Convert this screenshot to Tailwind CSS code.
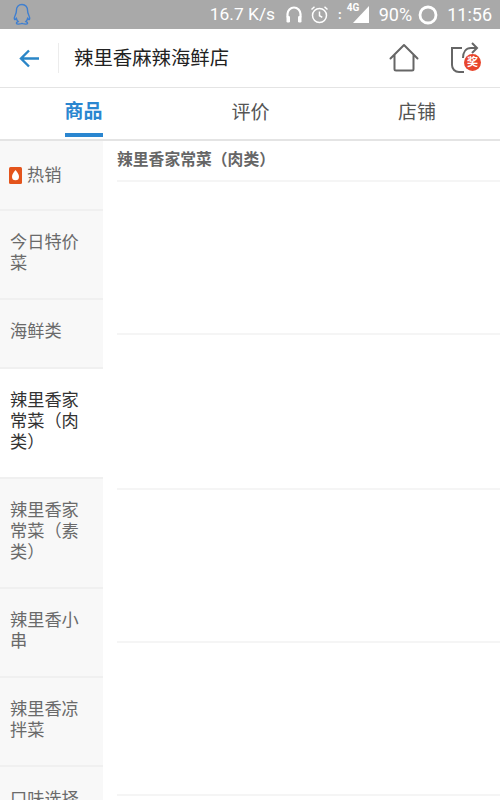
<!DOCTYPE html>
<html>
<head>
<meta charset="utf-8">
<script src="https://cdn.jsdelivr.net/npm/@tailwindcss/browser@4"></script>
</head>
<body class="bg-white">
<div class="w-[500px] h-[800px] overflow-hidden bg-white font-['Roboto','Noto_Sans_CJK_SC',sans-serif]">

    <!-- Status bar -->
    <div class="h-[29px] bg-[#a9a9a9] flex items-center text-white text-[18px] pl-[13px] pr-[8px]">
        <svg width="18" height="24" viewBox="0 0 18 24" fill="none" stroke="#3f7fd0" stroke-width="1.4">
            <path d="M9 1.5c-3.6 0-5.6 2.8-5.6 6.2 0 1.6-.3 2.6-1 4-.9 1.9-1.4 3.6-.9 4.6.4.6 1.200.1 1.900-.8.3 1.300 1 2.300 1.700 3-1 .4-1.900 1-1.700 1.800.3 1 2.800 1 4.700.4.500-.2 1.300-.2 1.800 0 1.900.6 4.400.6 4.700-.4.200-.8-.7-1.400-1.700-1.800.7-.7 1.400-1.700 1.700-3 .7.900 1.500 1.400 1.900.8.500-1 0-2.700-.9-4.600-.7-1.400-1-2.400-1-4 0-3.400-2-6.200-5.600-6.200z"/>
        </svg>
        <div class="ml-auto flex items-center">
            <span class="text-[17.4px]">16.7 K/s</span>
            <svg class="ml-[10px]" width="18" height="19" viewBox="0 0 18 19" fill="none" stroke="white" stroke-width="2.200">
                <path d="M2.500 12V9a6.500 6.500 0 0 1 13 0v3"/>
                <rect x="1.500" y="11" width="3.500" height="6.500" rx="1.200" fill="white" stroke="none"/>
                <rect x="13" y="11" width="3.500" height="6.500" rx="1.200" fill="white" stroke="none"/>
            </svg>
            <svg class="ml-[7px]" width="19" height="19" viewBox="0 0 19 19" fill="none" stroke="white" stroke-width="1.500">
                <circle cx="9.500" cy="10.500" r="7"/>
                <path d="M9.500 6.500v4.200l2.800 1.600M1.500 4.500l3-2.700M17.500 4.500l-3-2.700"/>
            </svg>
            <span class="ml-[9px] text-[13px] font-bold leading-none">:</span>
            <div class="relative w-[25px] h-[19px] ml-[2px]">
                <svg class="absolute left-0 top-0" width="25" height="19" viewBox="0 0 25 19">
                    <path d="M25 1v17H9z" fill="white"/>
                </svg>
                <span class="absolute left-[3px] top-[-3px] text-[10px] font-bold leading-[12px]">4G</span>
            </div>
            <span class="ml-[10px]">90%</span>
            <svg class="ml-[6px]" width="20" height="20" viewBox="0 0 20 20" fill="none">
                <circle cx="10" cy="10" r="8" stroke="white" stroke-width="2.800"/>
            </svg>
            <span class="ml-[9px]">11:56</span>
        </div>
    </div>

    <!-- Title bar -->
    <div class="h-[59px] flex items-center border-b border-[#e4e4e4]">
        <div class="w-[59px] h-[30px] flex items-center border-r border-[#ececec] pl-[19px]">
            <svg width="21" height="19" viewBox="0 0 21 19" fill="none" stroke="#2a86c8" stroke-width="2.400">
                <path d="M20 9.500H2M10 1.500l-8 8 8 8"/>
            </svg>
        </div>
        <div class="ml-[15px] pt-[2px] text-[19.4px] leading-none text-[#222]">辣里香麻辣海鲜店</div>
        <div class="ml-auto flex items-center">
            <svg width="30" height="30" viewBox="0 0 30 30" fill="none" stroke="#666" stroke-width="2" stroke-linejoin="round" stroke-linecap="round">
                <path d="M1.500 15.500 15 2l13.500 13.500M5.500 12v14a1.500 1.500 0 0 0 1.500 1.500h16a1.500 1.500 0 0 0 1.500-1.500V12"/>
            </svg>
            <div class="relative w-[32px] h-[32px] ml-[30px] mr-[19px]">
                <svg width="32" height="32" viewBox="0 0 32 32" fill="none" stroke="#666" stroke-width="2">
                    <path d="M13 6H3v17c0 4 3 7 7 7h5M14 16c0-6 3-10 8-10h6M23 1l5 5-5 5"/>
                </svg>
                <span class="absolute right-0 bottom-[3px] w-[17px] h-[17px] rounded-full bg-[#e8452c] text-white text-[11px] leading-[17px] text-center font-bold">奖</span>
            </div>
        </div>
    </div>

    <!-- Tabs -->
    <div class="h-[53px] flex border-b-2 border-[#e4e4e4] text-[19px] text-[#555]">
        <div class="w-[167px] flex justify-center">
            <div class="h-[49px] w-[38px] pt-[3px] flex items-center justify-center whitespace-nowrap border-b-[4px] border-[#2a86d0] text-[#2a86d0] font-bold">商品</div>
        </div>
        <div class="w-[167px] flex items-center justify-center">评价</div>
        <div class="w-[166px] flex items-center justify-center">店铺</div>
    </div>

    <div class="flex">
        <!-- Category menu -->
        <div class="w-[103px] shrink-0 bg-[#f8f8f8] text-[#6a6a6a] text-[17.2px] leading-[21px]">
            <div class="h-[70px] flex items-center pl-[9px] border-b-2 border-[#f0f0f0]">
                <svg width="13" height="17" viewBox="0 0 13 17" class="mr-[5px]">
                    <rect width="13" height="17" rx="1.500" fill="#e4541c"/>
                    <path d="M6.500 3c2 2.600 3.500 4.400 3.500 6.800a3.500 3.500 0 0 1-7 0C3 7.400 4.500 5.600 6.500 3z" fill="#fff"/>
                </svg>
                <span>热销</span>
            </div>
            <div class="h-[89px] flex items-center px-[10px] pb-[3px] border-b-2 border-[#f0f0f0]">今日特价菜</div>
            <div class="h-[69px] flex items-center px-[10px] pb-[4px] border-b-2 border-[#f0f0f0]">海鲜类</div>
            <div class="h-[108px] flex items-center px-[10px] pb-[4px] bg-white text-[#333]">辣里香家常菜（肉类）</div>
            <div class="h-[112px] flex items-center px-[10px] pb-[4px] border-y-2 border-[#f0f0f0]">辣里香家常菜（素类）</div>
            <div class="h-[89px] flex items-center px-[10px] pb-[4px] border-b-2 border-[#f0f0f0]">辣里香小串</div>
            <div class="h-[89px] flex items-center px-[10px] pb-[4px] border-b-2 border-[#f0f0f0]">辣里香凉拌菜</div>
            <div class="h-[89px] px-[10px] pt-[22px]">口味选择</div>
        </div>

        <!-- Product list -->
        <div class="flex-1 pl-[14px]">
            <div class="h-[41px] pt-[8px] text-[15.8px] leading-[22px] font-bold text-[#666] border-b-2 border-[#f5f5f5]">辣里香家常菜（肉类）</div>
            <div class="h-[153px] border-b-2 border-[#f5f5f5]"></div>
            <div class="h-[155px] border-b-2 border-[#f5f5f5]"></div>
            <div class="h-[153px] border-b-2 border-[#f5f5f5]"></div>
            <div class="h-[153px] border-b-2 border-[#f5f5f5]"></div>
        </div>
    </div>
</div>
</body>
</html>
